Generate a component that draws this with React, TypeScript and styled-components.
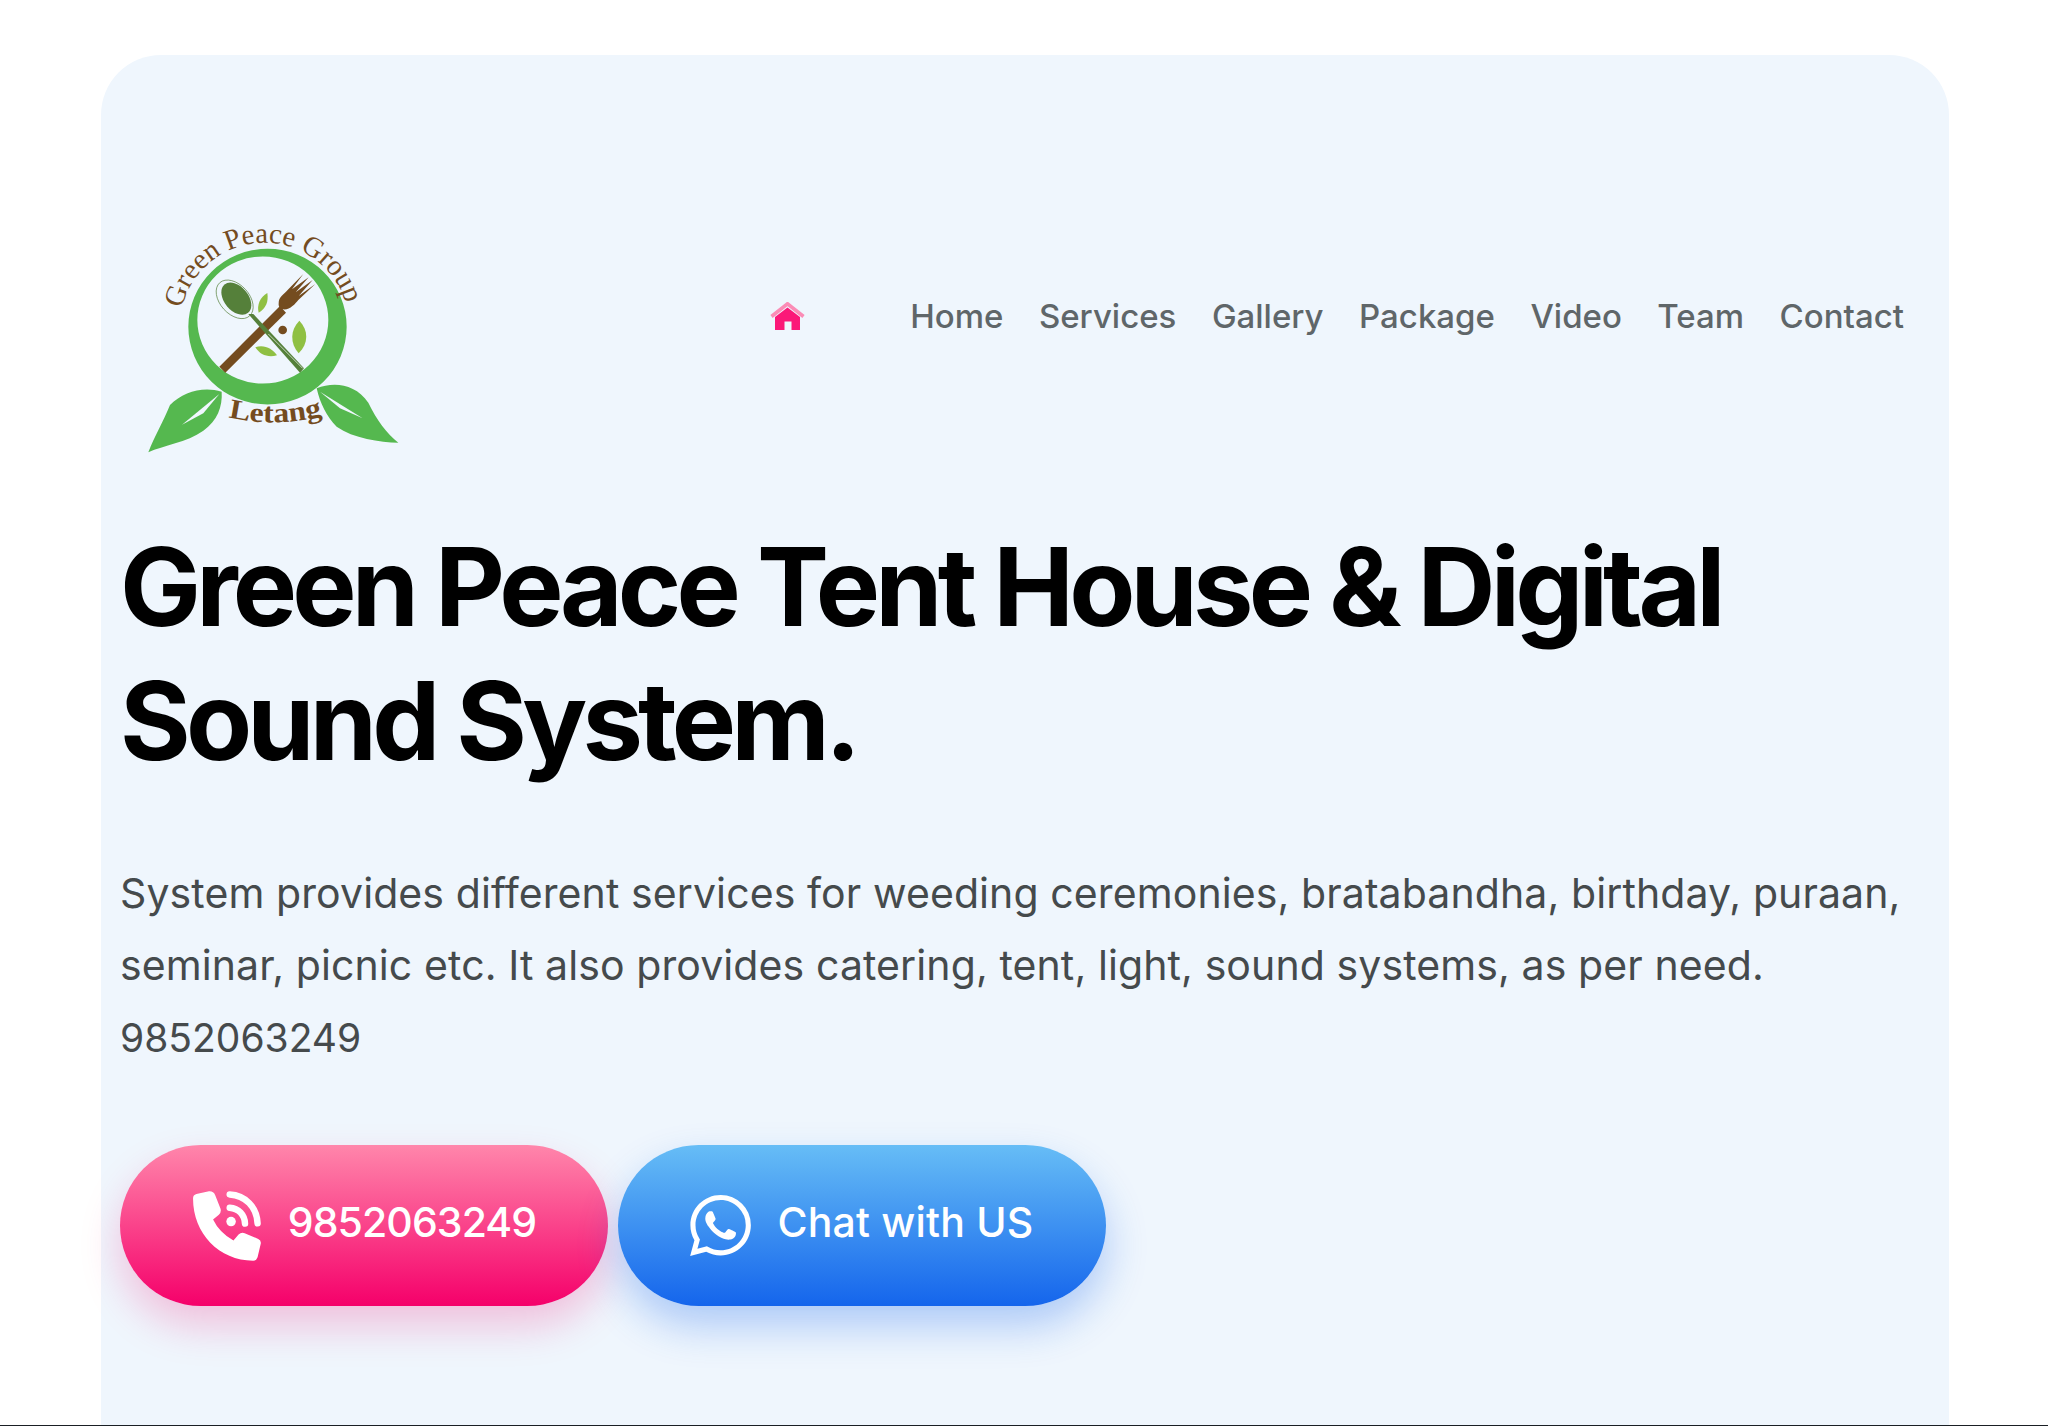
import React from "react";
import styled, { createGlobalStyle } from "styled-components";
import { SiWhatsapp } from "react-icons/si";

const GlobalStyle = createGlobalStyle`
  html, body {
    margin: 0;
    padding: 0;
    height: 1426px;
    overflow: hidden;
    background: #fff;
    font-family: Inter, "Liberation Sans", sans-serif;
  }
  * { box-sizing: border-box; }
`;

const navItems = ["Home", "Services", "Gallery", "Package", "Video", "Team", "Contact"];

const Logo: React.FC = () => (
  <LogoSvg viewBox="0 0 960 840" aria-label="Green Peace Group Letang">
    <defs>
      <path id="arcTop" d="M185,326 A255,255 0 0 1 682,326" />
      <path id="arcBottom" d="M325,652 Q460,684 606,648" />
    </defs>
    <path
      fillRule="evenodd"
      fill="#55b84f"
      d="M205,380 a237,233 0 1 0 475,0 a237,233 0 1 0 -475,0 Z M232,360 a196,190 0 1 1 393,0 a196,190 0 1 1 -393,0 Z"
    />
    <path d="M298,500 L480,318 L498,338 L316,518 Z" fill="#744c1f" />
    <path
      fill="#744c1f"
      d="M476,310 C476,290 490,285 505,268 L550,222 L516,268 L566,232 L527,277 L578,240 L536,288 L586,252 L535,300 C525,312 510,330 490,328 C480,327 475,320 476,310 Z"
    />
    <path d="M385,342 L400,342 L552,505 L540,518 Z" fill="#55803a" />
    <path d="M445,402 L548,505" stroke="#fff" strokeWidth="2" fill="none" />
    <ellipse cx="349" cy="296" rx="55" ry="36" transform="rotate(50 349 296)" fill="#55803a" />
    <ellipse cx="344" cy="298" rx="67" ry="44" transform="rotate(48 344 298)" fill="none" stroke="#55803a" strokeWidth="2" />
    <path d="M416,338 C410,315 420,292 442,279 C446,305 438,325 416,338 Z" fill="#8fc043" />
    <path d="M538,362 C510,390 510,430 536,460 C566,430 566,390 538,362 Z" fill="#8fc043" />
    <path d="M406,442 C430,432 458,445 471,466 C445,474 420,465 406,442 Z" fill="#8fc043" />
    <circle cx="488" cy="390" r="13" fill="#744c1f" />
    <path
      fill="#55b84f"
      d="M305,575 C250,558 190,575 150,615 C130,665 105,705 85,757 C130,735 200,728 250,692 C292,662 308,620 305,575 Z"
    />
    <path d="M186,674 L298,582 L250,640 Z" fill="#f0f7fe" />
    <path
      fill="#55b84f"
      d="M590,565 C640,545 705,550 745,608 C770,660 800,700 835,728 C780,727 700,715 650,680 C620,650 600,610 590,565 Z"
    />
    <path d="M600,575 L728,655 L660,625 Z" fill="#f0f7fe" />
    <LogoArcText fontSize="86" fill="#744c1f">
      <textPath href="#arcTop" textLength="670" lengthAdjust="spacing">
        Green Peace Group
      </textPath>
    </LogoArcText>
    <LogoArcText fontSize="84" fontWeight="700" fill="#744c1f">
      <textPath href="#arcBottom" textLength="285" lengthAdjust="spacingAndGlyphs">
        Letang
      </textPath>
    </LogoArcText>
  </LogoSvg>
);

const HomeIcon: React.FC = () => (
  <HomeSvg viewBox="0 0 35 28">
    <path d="M1.5,14.5 L17.5,1.8 L33.5,14.5" fill="none" stroke="#fb8cb6" strokeWidth="3.6" />
    <path
      d="M5,15 L17.5,5.5 L30,15 L30,28 L21.5,28 L21.5,19.5 L14.5,19.5 L14.5,28 L5,28 Z"
      fill="#fb1878"
    />
  </HomeSvg>
);

const PhoneIcon: React.FC = () => (
  <PhoneSvg viewBox="265 207 206 212">
    <path
      fill="#fff"
      d="M268,232 Q268,222 278,219 L315,211 Q328,210 333,222 L349,262 Q352,272 344,280 L327,294 Q345,332 387,356 L402,338 Q410,330 420,334 L460,351 Q470,356 467,367 L458,405 Q455,415 445,415 C345,415 268,335 268,232 Z"
    />
    <path d="M376,220 C422,222 456,258 458,305" fill="none" stroke="#fff" strokeWidth="19" strokeLinecap="round" />
    <path d="M376,259 C402,261 420,280 421,306" fill="none" stroke="#fff" strokeWidth="19" strokeLinecap="round" />
    <circle cx="380" cy="300" r="14" fill="#fff" />
  </PhoneSvg>
);

const App: React.FC = () => (
  <>
    <GlobalStyle />
    <Page>
      <Card>
        <Header>
          <Logo />
          <Nav>
            <HomeLink href="#">
              <HomeIcon />
            </HomeLink>
            <NavLinks>
              {navItems.map((item) => (
                <NavLink key={item} href="#">
                  {item}
                </NavLink>
              ))}
            </NavLinks>
          </Nav>
        </Header>
        <Title>
          Green Peace Tent House &amp; Digital
          <br />
          Sound System.
        </Title>
        <Description>
          System provides different services for weeding ceremonies, bratabandha, birthday, puraan,
          <br />
          seminar, picnic etc. It also provides catering, tent, light, sound systems, as per need.
          <br />
          <DescriptionPhone>9852063249</DescriptionPhone>
        </Description>
        <Actions>
          <ActionButton href="#" $variant="pink">
            <PhoneIcon />
            <PhoneNumber>9852063249</PhoneNumber>
          </ActionButton>
          <ActionButton href="#" $variant="blue">
            <SiWhatsapp size={61} />
            <ChatLabel>Chat with US</ChatLabel>
          </ActionButton>
        </Actions>
      </Card>
      <BottomLine />
    </Page>
  </>
);

const Page = styled.div`
  position: relative;
  height: 1426px;
  padding: 55px 99px 0 101px;
  overflow: hidden;
`;

const Card = styled.main`
  height: 1500px;
  padding: 145px 20px 0 19px;
  background: #eff6fd;
  border-radius: 60px 60px 0 0;
`;

const Header = styled.header`
  display: flex;
  justify-content: space-between;
  align-items: flex-start;
  height: 280px;
`;

const LogoSvg = styled.svg`
  display: block;
  width: 320px;
  height: 280px;
`;

const LogoArcText = styled.text`
  font-family: "Liberation Serif", serif;
`;

const Nav = styled.nav`
  display: flex;
  align-items: center;
  gap: 105px;
  margin-top: 96px;
  padding-right: 25px;
  height: 40px;
`;

const HomeLink = styled.a`
  display: flex;
`;

const HomeSvg = styled.svg`
  display: block;
  width: 35px;
  height: 28px;
`;

const NavLinks = styled.div`
  display: flex;
  gap: 35.5px;
`;

const NavLink = styled.a`
  color: #5f6669;
  font-size: 33px;
  font-weight: 500;
  line-height: 40px;
  text-decoration: none;
`;

const Title = styled.h1`
  margin: 40px 0 0;
  color: #000;
  font-size: 108px;
  font-weight: 700;
  line-height: 134px;
  letter-spacing: -4.8px;
  white-space: nowrap;
`;

const Description = styled.p`
  margin: 69px 0 0;
  color: #454a4c;
  font-size: 41px;
  line-height: 72px;
  letter-spacing: 0.1px;
  white-space: nowrap;
`;

const DescriptionPhone = styled.span`
  font-size: 39px;
  letter-spacing: 0;
`;

const Actions = styled.div`
  display: flex;
  gap: 10px;
  margin-top: 71px;
`;

const ActionButton = styled.a<{ $variant: "pink" | "blue" }>`
  display: flex;
  align-items: center;
  justify-content: center;
  gap: 26px;
  width: 488px;
  height: 161px;
  color: #fff;
  text-decoration: none;
  border-radius: 81px;
  background: ${({ $variant }) =>
    $variant === "pink"
      ? "linear-gradient(180deg, #ff86ab 0%, #f5006a 100%)"
      : "linear-gradient(180deg, #66bdf6 0%, #1565ec 100%)"};
  box-shadow: ${({ $variant }) =>
    $variant === "pink"
      ? "0 20px 40px rgba(245, 0, 106, 0.22)"
      : "0 20px 40px rgba(21, 101, 236, 0.3)"};
`;

const PhoneSvg = styled.svg`
  display: block;
  width: 70px;
  height: 72px;
`;

const PhoneNumber = styled.span`
  margin-bottom: 7px;
  font-size: 41px;
  font-weight: 500;
  letter-spacing: -0.9px;
`;

const ChatLabel = styled.span`
  margin-bottom: 7px;
  font-size: 41px;
  font-weight: 500;
  letter-spacing: 0.2px;
`;

const BottomLine = styled.div`
  position: absolute;
  left: 0;
  right: 0;
  bottom: 0;
  height: 1px;
  background: #1a1f24;
`;

export default App;
